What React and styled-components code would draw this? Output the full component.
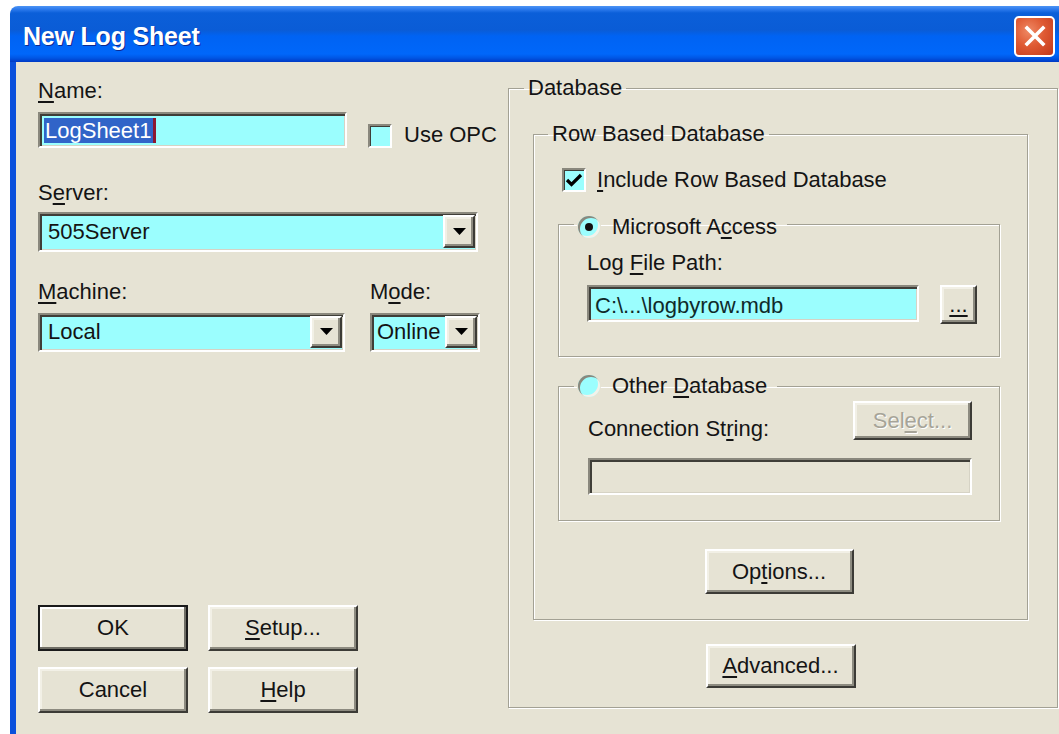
import React from 'react';
import styled, { createGlobalStyle } from 'styled-components';

const GlobalStyle = createGlobalStyle`
  html, body {
    margin: 0;
    padding: 0;
    background: #fff;
    overflow: hidden;
  }
  body {
    font-family: "Liberation Sans", Arial, sans-serif;
    color: #141414;
  }
  u {
    text-decoration-thickness: 2px;
    text-underline-offset: 3px;
  }
`;

const Window = styled.div`
  margin: 6px 0 0 10px;
  width: 1056px;
  height: 728px;
  display: flex;
  flex-direction: column;
`;

const TitleBar = styled.div`
  flex-shrink: 0;
  height: 56px;
  box-sizing: border-box;
  padding: 4px 11px 0 13px;
  border-radius: 8px 8px 0 0;
  display: flex;
  align-items: center;
  justify-content: space-between;
  background: linear-gradient(
    180deg,
    #4d94f4 0,
    #2f7cee 3px,
    #0b5fd9 7px,
    #0a5cd6 24px,
    #0063f3 30px,
    #0067fa 48px,
    #0056e4 52px,
    #0039c4 56px
  );
`;

const Title = styled.span`
  font-size: 25px;
  font-weight: bold;
  color: #fff;
  text-shadow: 1px 1px 0 #0c2a92;
  letter-spacing: -0.2px;
`;

const CloseButton = styled.span`
  width: 41px;
  height: 41px;
  box-sizing: border-box;
  border: 2px solid #fff;
  border-radius: 5px;
  display: flex;
  align-items: center;
  justify-content: center;
  background: radial-gradient(circle at 35% 35%, #ef8a66 0, #df5a33 45%, #c2381a 100%);
`;

const Frame = styled.div`
  flex: 1;
  display: flex;
  background: #e6e3d4;
  border-left: 6px solid #0a50dc;
`;

const LeftColumn = styled.div`
  width: 492px;
  flex-shrink: 0;
  box-sizing: border-box;
  padding: 16px 0 21px 22px;
  display: flex;
  flex-direction: column;
`;

const RightColumn = styled.div`
  flex: 1;
  padding-top: 13px;
`;

const Label = styled.div`
  font-size: 22px;
  line-height: 26px;
  height: 26px;
  white-space: nowrap;
  margin-top: ${p => p.$gap || 0}px;
  color: #141414;
`;

const sunken = `
  box-sizing: border-box;
  border: 2px solid;
  border-color: #8a887d #fff #fff #8a887d;
  box-shadow: inset 2px 2px 0 #3f3e38, inset -1px -1px 0 #d6d3c5;
`;

const raised = `
  box-sizing: border-box;
  border: 2px solid;
  border-color: #fff #3c3b36 #3c3b36 #fff;
  box-shadow: inset -2px -2px 0 #8d8b80, inset 2px 2px 0 #f2f0e6;
  background: #e6e3d4;
`;

const Field = styled.div`
  ${sunken}
  width: ${p => p.$w}px;
  height: ${p => p.$h}px;
  background: ${p => (p.$disabled ? '#e6e3d4' : '#9bfefe')};
  padding: 4px 4px 0 4px;
  font-size: 22px;
  line-height: 26px;
  display: flex;
  align-items: flex-start;
  white-space: nowrap;
  overflow: hidden;
`;

const FieldText = styled.span`
  padding: 2px 0 0 2px;
  color: #0f2a2a;
`;

const Selection = styled.span`
  background: #3164c8;
  color: #fff;
  padding: 0 2px 0 1px;
  line-height: 25px;
`;

const Caret = styled.span`
  width: 3px;
  height: 25px;
  background: #8c1830;
`;

const Combo = styled.div`
  ${sunken}
  width: ${p => p.$w}px;
  height: ${p => p.$h}px;
  background: #9bfefe;
  padding: 1px 1px 2px 2px;
  display: flex;
  align-items: stretch;
`;

const ComboText = styled.span`
  flex: 1;
  display: flex;
  align-items: center;
  padding-left: ${p => p.$pad || 6}px;
  font-size: 22px;
  white-space: nowrap;
  overflow: hidden;
  color: #141414;
`;

const DropButton = styled.span`
  ${raised}
  width: 32px;
  display: flex;
  align-items: center;
  justify-content: center;
`;

const Row = styled.div`
  display: flex;
  align-items: ${p => p.$align || 'center'};
  justify-content: ${p => p.$justify || 'flex-start'};
  gap: ${p => p.$gap || 0}px;
  margin-top: ${p => p.$top || 0}px;
  margin-left: ${p => p.$left || 0}px;
`;

const Column = styled.div`
  display: flex;
  flex-direction: column;
`;

const CheckBox = styled.span`
  ${sunken}
  box-shadow: inset 1px 1px 0 #3f3e38;
  width: 24px;
  height: 24px;
  flex-shrink: 0;
  background: #9bfefe;
  display: inline-flex;
  align-items: center;
  justify-content: center;
  margin-left: ${p => p.$left || 0}px;
`;

const CheckLabel = styled.span`
  font-size: 22px;
  line-height: 26px;
  white-space: nowrap;
  margin-left: ${p => p.$gap}px;
`;

const Radio = styled.span`
  width: 22px;
  height: 22px;
  flex-shrink: 0;
  border-radius: 50%;
  background: #9bfefe;
  box-shadow: inset 2px 2px 0 #8a887d, inset -2px -2px 0 #f4f2ea, 0 0 0 1px #e6e3d4;
  display: inline-flex;
  align-items: center;
  justify-content: center;
`;

const RadioDot = styled.span`
  width: 8px;
  height: 8px;
  border-radius: 50%;
  background: #111;
`;

const Button = styled.div`
  ${raised}
  width: ${p => p.$w}px;
  height: ${p => p.$h}px;
  display: flex;
  align-items: center;
  justify-content: center;
  font-size: 22px;
  white-space: nowrap;
  color: ${p => (p.$disabled ? '#a6a498' : '#141414')};
  text-shadow: ${p => (p.$disabled ? '1px 1px 0 #fff' : 'none')};
  ${p => p.$default && `
    border-color: #1a1a1a;
    box-shadow: inset -2px -2px 0 #6f6d64, inset 2px 2px 0 #fff;
  `}
  ${p => p.$center && 'align-self: center;'}
  margin-top: ${p => p.$top || 0}px;
`;

const ButtonGrid = styled.div`
  margin-top: auto;
  display: grid;
  grid-template-columns: 150px 150px;
  grid-auto-rows: 46px;
  column-gap: 20px;
  row-gap: 16px;
`;

const Group = styled.fieldset`
  margin: 0;
  padding: 0;
  min-width: 0;
  width: ${p => (p.$w ? `${p.$w}px` : 'auto')};
  box-sizing: border-box;
  border: 1px solid #a3a194;
  box-shadow: inset 1px 1px 0 #fff, 1px 1px 0 #fff;
  margin-top: ${p => p.$top || 0}px;
`;

const Legend = styled.legend`
  margin-left: ${p => p.$offset}px;
  padding: 0 ${p => p.$right || 4}px 0 4px;
  font-size: 22px;
  line-height: 26px;
  height: 26px;
  white-space: nowrap;
`;

const LegendInner = styled.span`
  display: inline-flex;
  align-items: center;
  gap: 12px;
  height: 26px;
`;

const GroupBody = styled.div`
  display: flex;
  flex-direction: column;
  padding: ${p => p.$pad};
`;

const Arrow = () => (
  <svg width="13" height="8" viewBox="0 0 13 8">
    <polygon points="0,0 13,0 6.5,7" fill="#000" />
  </svg>
);

const Check = () => (
  <svg width="18" height="16" viewBox="0 0 18 16">
    <path d="M2 8 L6.5 12.5 L16 3" stroke="#000" strokeWidth="3.2" fill="none" />
  </svg>
);

const CloseX = () => (
  <svg width="22" height="22" viewBox="0 0 22 22">
    <path d="M3 3 L19 19 M19 3 L3 19" stroke="#fff" strokeWidth="3.6" strokeLinecap="square" />
  </svg>
);

export default function App() {
  return (
    <>
      <GlobalStyle />
      <Window>
        <TitleBar>
          <Title>New Log Sheet</Title>
          <CloseButton>
            <CloseX />
          </CloseButton>
        </TitleBar>

        <Frame>
          <LeftColumn>
            <Label>
              <u>N</u>ame:
            </Label>
            <Row $align="flex-end" $top={8}>
              <Field $w={309} $h={36}>
                <Selection>LogSheet1</Selection>
                <Caret />
              </Field>
              <CheckBox $left={21} />
              <CheckLabel $gap={12}>Use OPC</CheckLabel>
            </Row>

            <Label $gap={32}>
              S<u>e</u>rver:
            </Label>
            <Row $top={6}>
              <Combo $w={440} $h={40}>
                <ComboText>505Server</ComboText>
                <DropButton>
                  <Arrow />
                </DropButton>
              </Combo>
            </Row>

            <Row $align="flex-start" $gap={25} $top={27}>
              <Column>
                <Label>
                  <u>M</u>achine:
                </Label>
                <Row $top={8}>
                  <Combo $w={307} $h={39}>
                    <ComboText>Local</ComboText>
                    <DropButton>
                      <Arrow />
                    </DropButton>
                  </Combo>
                </Row>
              </Column>
              <Column>
                <Label>
                  M<u>o</u>de:
                </Label>
                <Row $top={8}>
                  <Combo $w={110} $h={39}>
                    <ComboText $pad={3}>Online</ComboText>
                    <DropButton>
                      <Arrow />
                    </DropButton>
                  </Combo>
                </Row>
              </Column>
            </Row>

            <ButtonGrid>
              <Button $default>OK</Button>
              <Button>
                <u>S</u>etup...
              </Button>
              <Button>Cancel</Button>
              <Button>
                <u>H</u>elp
              </Button>
            </ButtonGrid>
          </LeftColumn>

          <RightColumn>
            <Group $w={550}>
              <Legend $offset={15}>Database</Legend>
              <GroupBody $pad="20px 29px 19px 24px">
                <Group>
                  <Legend $offset={14}>Row Based Database</Legend>
                  <GroupBody $pad="20px 27px 25px 24px">
                    <Row $left={4}>
                      <CheckBox>
                        <Check />
                      </CheckBox>
                      <CheckLabel $gap={11}>
                        <u>I</u>nclude Row Based Database
                      </CheckLabel>
                    </Row>

                    <Group $top={18}>
                      <Legend $offset={15} $right={10}>
                        <LegendInner>
                          <Radio>
                            <RadioDot />
                          </Radio>
                          <span>
                            Microsoft A<u>c</u>cess
                          </span>
                        </LegendInner>
                      </Legend>
                      <GroupBody $pad="13px 22px 32px 28px">
                        <Label>
                          Log <u>F</u>ile Path:
                        </Label>
                        <Row $top={9} $gap={21} $align="flex-start">
                          <Field $w={332} $h={37}>
                            <FieldText>C:\...\logbyrow.mdb</FieldText>
                          </Field>
                          <Button $w={37} $h={39}>
                            <u>...</u>
                          </Button>
                        </Row>
                      </GroupBody>
                    </Group>

                    <Group $top={16}>
                      <Legend $offset={15} $right={10}>
                        <LegendInner>
                          <Radio />
                          <span>
                            Other <u>D</u>atabase
                          </span>
                        </LegendInner>
                      </Legend>
                      <GroupBody $pad="2px 27px 25px 29px">
                        <Row $justify="space-between" $align="flex-start">
                          <Label $gap={15}>
                            Connection St<u>r</u>ing:
                          </Label>
                          <Button $w={119} $h={39} $disabled>
                            Sel<u>e</u>ct...
                          </Button>
                        </Row>
                        <Row $top={16}>
                          <Field $w={384} $h={37} $disabled />
                        </Row>
                      </GroupBody>
                    </Group>

                    <Button $w={149} $h={45} $center $top={28}>
                      Op<u>t</u>ions...
                    </Button>
                  </GroupBody>
                </Group>

                <Button $w={150} $h={44} $center $top={24}>
                  <u>A</u>dvanced...
                </Button>
              </GroupBody>
            </Group>
          </RightColumn>
        </Frame>
      </Window>
    </>
  );
}
